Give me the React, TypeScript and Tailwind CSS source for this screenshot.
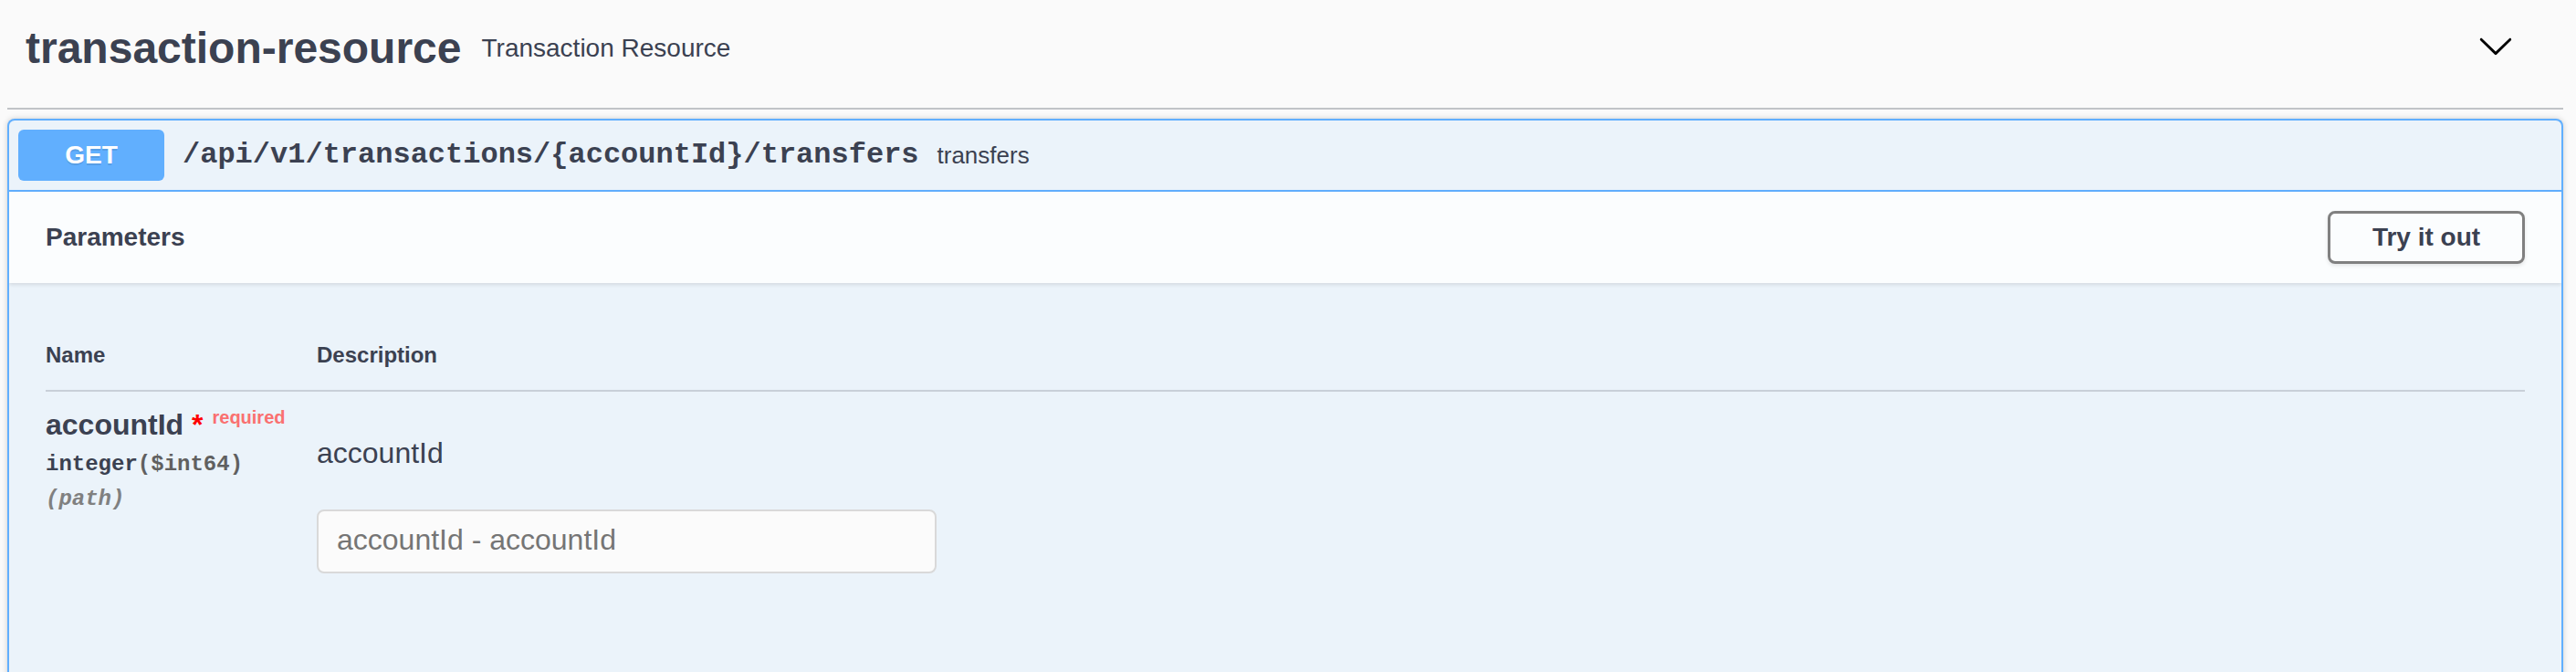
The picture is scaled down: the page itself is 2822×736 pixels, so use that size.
import React from "react";

export default function App() {
  return (
    <div className="min-h-screen w-full bg-[#fafafa] font-['Liberation_Sans',Arial,sans-serif] text-[#3b4151]">
      {/* Tag header */}
      <div className="ml-[8px] mr-[14px] flex h-[120px] items-center border-b-2 border-[#c1c3c7] pb-[12px] pl-[20px] pr-[54px]">
        <span className="text-[48px] font-bold leading-[56px] text-[#3b4151]">transaction-resource</span>
        <span className="ml-[22px] text-[28px] leading-[32px] text-[#3b4151]">Transaction Resource</span>
        <div className="flex-1" />
        <svg width="40" height="40" viewBox="0 0 20 20" className="mb-[6px]" aria-hidden="true">
          <path
            fill="#000"
            d="M17.418 6.109c.272-.268.709-.268.979 0s.271.701 0 .969l-7.908 7.83c-.27.268-.707.268-.979 0l-7.908-7.83c-.27-.268-.27-.701 0-.969.271-.268.709-.268.979 0L10 13.25l7.418-7.141z"
          />
        </svg>
      </div>

      {/* Operation block */}
      <div className="ml-[8px] mr-[14px] mt-[10px] overflow-hidden rounded-t-[8px] border-2 border-b-0 border-[#61affe] bg-[#ebf3fa] shadow-[0_0_6px_rgba(0,0,0,0.19)]">
        {/* Summary */}
        <div className="flex items-center border-b-2 border-[#61affe] p-[10px]">
          <div className="flex h-[56px] w-[160px] items-center justify-center rounded-[6px] bg-[#61affe] text-[28px] font-bold text-white [text-shadow:0_2px_0_rgba(0,0,0,0.1)]">
            GET
          </div>
          <span className="ml-[20px] font-['Liberation_Mono','Courier_New',monospace] text-[32px] font-bold leading-[40px] text-[#3b4151]">
            /api/v1/transactions/{"{accountId}"}/transfers
          </span>
          <span className="ml-[20px] text-[26px] leading-[32px] text-[#3b4151]">transfers</span>
        </div>

        {/* Parameters header */}
        <div className="relative z-10 flex h-[100px] items-center justify-between bg-[#fbfdfe] px-[40px] shadow-[0_2px_4px_rgba(0,0,0,0.1)]">
          <h4 className="text-[28px] font-bold leading-[32px] text-[#3b4151]">Parameters</h4>
          <button className="h-[58px] w-[216px] rounded-[8px] border-[3px] border-[#808080] bg-transparent text-[28px] font-bold text-[#3b4151] shadow-[0_2px_4px_rgba(0,0,0,0.1)]">
            Try it out
          </button>
        </div>

        {/* Table */}
        <div className="px-[40px] pb-[200px] pt-[41px]">
          <div className="flex border-b-2 border-[#c8cfd8] pb-[24px] pt-[24px]">
            <div className="w-[297px] text-[24px] font-bold leading-[28px] text-[#3b4151]">Name</div>
            <div className="flex-1 text-[24px] font-bold leading-[28px] text-[#3b4151]">Description</div>
          </div>

          <div className="flex pt-[20px]">
            <div className="w-[297px]">
              <div className="whitespace-nowrap text-[32px] font-bold leading-[32px] text-[#3b4151]">
                accountId
                <span className="text-[#ff0000]">&nbsp;*</span>
                <span className="relative top-[-12px] px-[10px] text-[20px] font-bold leading-none text-[#fa7070]">
                  required
                </span>
              </div>
              <div className="mt-[14px] font-['Liberation_Mono','Courier_New',monospace] text-[24px] font-bold leading-[28px] text-[#3b4151]">
                integer<span className="text-[#606060]">($int64)</span>
              </div>
              <div className="mt-[10px] font-['Liberation_Mono','Courier_New',monospace] text-[24px] font-bold italic leading-[28px] text-[#808080]">
                (path)
              </div>
            </div>
            <div className="flex-1">
              <p className="mt-[27px] text-[32px] leading-[40px] text-[#3b4151]">accountId</p>
              <input
                type="text"
                placeholder="accountId - accountId"
                className="mt-[42px] h-[70px] w-[679px] rounded-[8px] border-2 border-[#d9d9d9] bg-[#fbfbfb] px-[20px] pb-[4px] text-[32px] text-[#3b4151] outline-none placeholder:text-[#757575]"
              />
            </div>
          </div>
        </div>
      </div>
    </div>
  );
}
